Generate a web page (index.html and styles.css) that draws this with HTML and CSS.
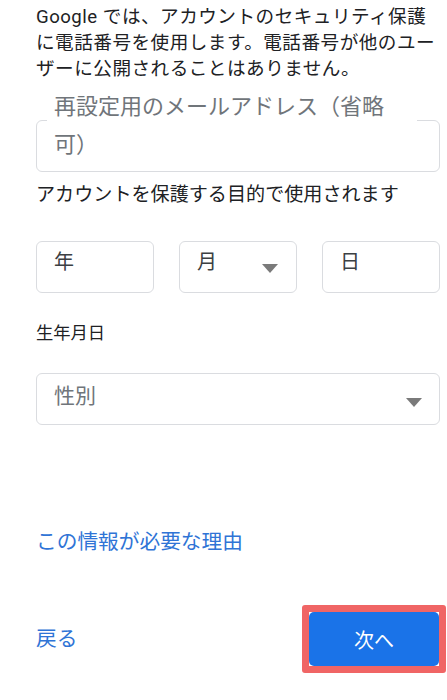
FILE: index.html
```html
<!DOCTYPE html>
<html lang="ja">
<head>
<meta charset="utf-8">
<title>アカウント情報</title>
<link rel="stylesheet" href="styles.css">
</head>
<body>
<main class="page">
  <p class="intro">Google では、アカウントのセキュリティ保護<br>に電話番号を使用します。電話番号が他のユー<br>ザーに公開されることはありません。</p>

  <div class="field field-email">
    <span class="float-label">再設定用のメールアドレス（省略<br>可）</span>
  </div>
  <p class="helper">アカウントを保護する目的で使用されます</p>

  <div class="date-row">
    <div class="field small"><span class="ph">年</span></div>
    <div class="field small select"><span class="ph">月</span><span class="caret"></span></div>
    <div class="field small"><span class="ph">日</span></div>
  </div>
  <p class="caption">生年月日</p>

  <div class="field select gender"><span class="ph big">性別</span><span class="caret"></span></div>

  <a class="link why" href="#">この情報が必要な理由</a>

  <div class="actions">
    <a class="link back" href="#">戻る</a>
    <div class="highlight"><button class="next" type="button">次へ</button></div>
  </div>
</main>
</body>
</html>
```

FILE: styles.css
```css
html, body {
  margin: 0;
  padding: 0;
  background: #ffffff;
}

body {
  font-family: "Roboto", "Noto Sans CJK JP", sans-serif;
  color: #202124;
}

.page {
  padding: 0 7px 0 36px;
  display: flex;
  flex-direction: column;
}

.intro {
  margin: 4px 0 0;
  font-size: 18.6px;
  line-height: 26px;
  letter-spacing: 0.5px;
  color: #202124;
  white-space: nowrap;
}

.field {
  border: 1px solid #dadce0;
  border-radius: 6px;
  box-sizing: border-box;
  height: 52px;
  display: flex;
  align-items: center;
  position: relative;
}

.field-email {
  margin-top: 38px;
}

.float-label {
  position: absolute;
  top: -33px;
  left: 10px;
  right: 22px;
  padding: 0 7px;
  background: #ffffff;
  font-size: 22px;
  line-height: 38px;
  color: #70757a;
  white-space: nowrap;
}

.helper {
  margin: 10px 0 0;
  font-size: 19.1px;
  line-height: 26px;
  color: #202124;
}

.date-row {
  margin-top: 33px;
  display: grid;
  grid-template-columns: 118px 118px 118px;
  justify-content: space-between;
}

.ph {
  padding-left: 17px;
  font-size: 20px;
  line-height: 26px;
  color: #3c4043;
  margin-top: -10px;
}

.ph.big {
  font-size: 21px;
  color: #70757a;
  margin-top: -6px;
}

.select {
  justify-content: space-between;
}

.caret {
  width: 0;
  height: 0;
  border-left: 8px solid transparent;
  border-right: 8px solid transparent;
  border-top: 9px solid #7a7a7a;
  margin-right: 18px;
  margin-top: 2px;
}

.gender .caret {
  margin-right: 17px;
  margin-top: 6px;
}

.caption {
  margin: 29px 0 0;
  font-size: 17.3px;
  line-height: 22px;
  color: #202124;
}

.gender {
  margin-top: 29px;
}

.link {
  color: #2f74d6;
  text-decoration: none;
  font-size: 20.7px;
  line-height: 28px;
}

.why {
  margin-top: 103px;
  align-self: flex-start;
}

.actions {
  margin-top: 49px;
  display: flex;
  justify-content: space-between;
  align-items: center;
  margin-right: -7px;
}

.highlight {
  border: 7px solid #f06565;
  border-radius: 3px;
  padding: 0;
  margin-right: 1px;
}

.next {
  display: block;
  width: 130px;
  height: 54px;
  border: 0;
  border-radius: 5px;
  background: #1a73e8;
  color: #ffffff;
  font-family: "Roboto", "Noto Sans CJK JP", sans-serif;
  font-size: 20px;
  cursor: pointer;
}
```
